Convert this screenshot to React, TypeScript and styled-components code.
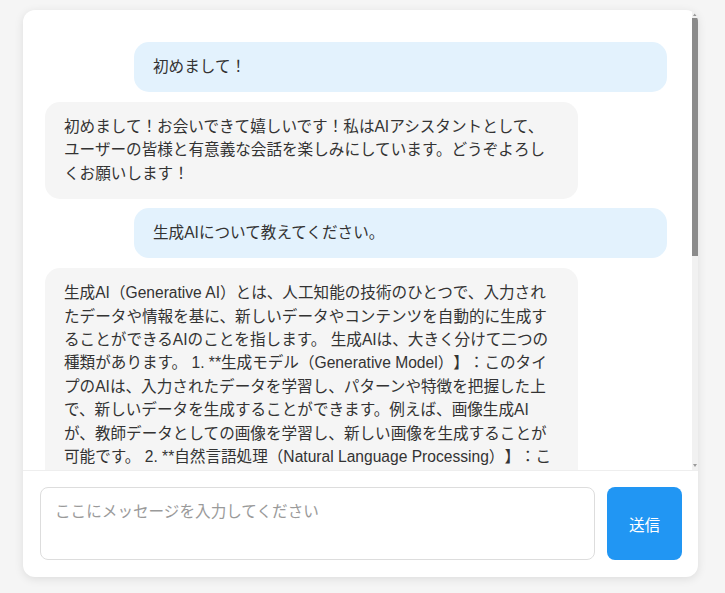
import React from "react";
import styled, { createGlobalStyle } from "styled-components";

const GlobalStyle = createGlobalStyle`
  html, body {
    margin: 0;
    padding: 0;
    background: #f5f5f5;
  }
  body {
    font-family: "Liberation Sans", "Noto Sans CJK JP", Arial, sans-serif;
    color: #333;
    text-spacing-trim: space-all;
    text-autospace: no-autospace;
  }
  *, *::before, *::after { box-sizing: border-box; }
`;

const Page = styled.div`
  height: 100vh;
  padding: 10px 27px 16px 23px;
`;

const Card = styled.main`
  height: 100%;
  display: flex;
  flex-direction: column;
  background: #ffffff;
  border-radius: 12px;
  overflow: hidden;
  box-shadow: 0 2px 10px rgba(0, 0, 0, 0.1);
`;

const MessagesPane = styled.div`
  flex: 1;
  min-height: 0;
  display: flex;
`;

const MessageList = styled.section`
  flex: 1;
  min-width: 0;
  overflow-y: auto;
  scrollbar-width: none;
  display: flex;
  flex-direction: column;
  gap: 9.7px;
  padding: 32px 25px 20px 22px;
`;

const ScrollTrack = styled.div`
  width: 6px;
  flex-shrink: 0;
  display: flex;
  flex-direction: column;
  align-items: center;
  background: #f1f1f1;
`;

const ScrollArrow = styled.span<{ $dir: "up" | "down" }>`
  flex-shrink: 0;
  height: 8px;
  width: 100%;
  display: flex;
  justify-content: center;
  align-items: ${(p) => (p.$dir === "up" ? "flex-end" : "flex-start")};
  padding: ${(p) => (p.$dir === "up" ? "0 0 2px" : "2px 0 0")};

  &::before {
    content: "";
    width: 0;
    height: 0;
    border-left: 2px solid transparent;
    border-right: 2px solid transparent;
    ${(p) =>
      p.$dir === "up"
        ? "border-bottom: 3px solid #9a9a9a;"
        : "border-top: 3px solid #9a9a9a;"}
  }
`;

const ScrollThumb = styled.div`
  width: 100%;
  height: 238px;
  flex-shrink: 0;
  background: #8b8b8b;
`;

const ScrollSpacer = styled.div`
  flex: 1;
`;

const Bubble = styled.div<{ $from: "user" | "bot" }>`
  width: 533px;
  flex-shrink: 0;
  padding: 13.3px 23px 13.3px 19px;
  border-radius: 15px;
  font-size: 15.6px;
  line-height: 23.4px;
  color: #333;
  background: ${(p) => (p.$from === "user" ? "#e3f2fd" : "#f5f5f5")};
  align-self: ${(p) => (p.$from === "user" ? "flex-end" : "flex-start")};
`;

const InputBar = styled.footer`
  display: flex;
  gap: 12px;
  padding: 16px 16px 17px 17px;
  border-top: 1px solid #eeeeee;
`;

const MessageInput = styled.textarea`
  flex: 1;
  height: 73px;
  resize: none;
  border: 1px solid #dddddd;
  border-radius: 8px;
  padding: 12px 14px;
  font-family: inherit;
  font-size: 15.6px;
  line-height: 23.4px;
  color: #333;
  outline: none;

  &::placeholder {
    color: #9a9a9a;
  }
`;

const SendButton = styled.button`
  width: 75px;
  height: 73px;
  border: none;
  border-radius: 8px;
  background: #2196f3;
  color: #ffffff;
  font-family: inherit;
  font-size: 15.6px;
  cursor: pointer;
`;

type Message = { from: "user" | "bot"; text: string };

const messages: Message[] = [
  { from: "user", text: "初めまして！" },
  {
    from: "bot",
    text: "初めまして！お会いできて嬉しいです！私はAIアシスタントとして、ユーザーの皆様と有意義な会話を楽しみにしています。どうぞよろしくお願いします！",
  },
  { from: "user", text: "生成AIについて教えてください。" },
  {
    from: "bot",
    text:
      "生成AI（Generative AI）とは、人工知能の技術のひとつで、入力されたデータや情報を基に、新しいデータやコンテンツを自動的に生成することができるAIのことを指します。 生成AIは、大きく分けて二つの種類があります。 1. **生成モデル（Generative Model）】：このタイプのAIは、入力されたデータを学習し、パターンや特徴を把握した上で、新しいデータを生成することができます。例えば、画像生成AIが、教師データとしての画像を学習し、新しい画像を生成することが可能です。 2. **自然言語処理（Natural Language Processing）】：このタイプのAIは、人間の言語を理解し、自然な文章を生成することができます。例えば、チャットボットや文章の要約、翻訳などに活用されています。 生成AIの代表的な技術としては、GAN（敵対的生成ネットワーク）やVAE（変分オートエンコーダ）、Transformerなどが挙げられます。これらの技術により、画像、音楽、文章、動画など、さまざまな種類のコンテンツを生成することが可能になりました。 一方で、生成AIには、著作権やプライバシーの問題、誤った情報の生成、悪用のリスクなど、いくつかの課題も指摘されています。そのため、生成AIを利用する際には、倫理的な配慮や適切なルール作りが重要とされています。 今後も生成AIの技術は進化を続け、私たちの生活やビジネスにさらに大きな影響を与えていくと考えられます。",
  },
];

export default function App() {
  return (
    <>
      <GlobalStyle />
      <Page>
        <Card>
          <MessagesPane>
            <MessageList>
              {messages.map((m, i) => (
                <Bubble key={i} $from={m.from}>
                  {m.text}
                </Bubble>
              ))}
            </MessageList>
            <ScrollTrack aria-hidden="true">
              <ScrollArrow $dir="up" />
              <ScrollThumb />
              <ScrollSpacer />
              <ScrollArrow $dir="down" />
            </ScrollTrack>
          </MessagesPane>
          <InputBar>
            <MessageInput placeholder="ここにメッセージを入力してください" />
            <SendButton type="button">送信</SendButton>
          </InputBar>
        </Card>
      </Page>
    </>
  );
}
